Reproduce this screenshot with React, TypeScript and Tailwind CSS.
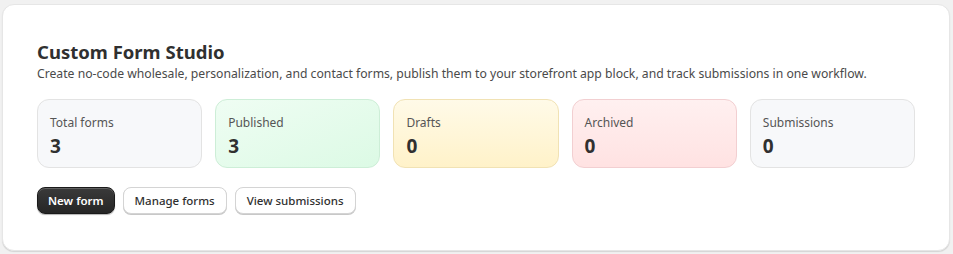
import React from "react";

const stats = [
  { label: "Total forms", value: "3", tone: "bg-[#f7f8fa] border-[#e3e3e3]" },
  { label: "Published", value: "3", tone: "bg-gradient-to-br from-[#effdf3] to-[#dcfae5] border-[#cdeed7]" },
  { label: "Drafts", value: "0", tone: "bg-gradient-to-b from-[#fffae8] to-[#fff2c9] border-[#f1e2b4]" },
  { label: "Archived", value: "0", tone: "bg-gradient-to-b from-[#fff0f0] to-[#ffe2e2] border-[#f2cfd1]" },
  { label: "Submissions", value: "0", tone: "bg-[#f7f8fa] border-[#e3e3e3]" },
];

const StatCard = ({ label, value, tone }: { label: string; value: string; tone: string }) => (
  <div className={`flex h-[69px] flex-col rounded-[12px] border px-3 pt-[14px] ${tone}`}>
    <span className="text-[12px] leading-[18px] text-[#555]">{label}</span>
    <span className="mt-[2px] text-[19px] font-bold leading-[24px] text-[#303030]">{value}</span>
  </div>
);

export default function App() {
  return (
    <div
      className="min-h-[254px] bg-[#f1f1f1] pb-[4px] pl-[2px] pr-[3px] pt-[4px]"
      style={{ fontFamily: '"Noto Sans", "Open Sans", sans-serif' }}
    >
      <section className="rounded-[12px] border border-[#e6e6e6] bg-white px-[34px] pb-[36px] pt-[35px] shadow-[0_1px_1px_rgba(0,0,0,0.12)]">
        <h1 className="text-[18.5px] font-bold leading-[24px] text-[#303030]">Custom Form Studio</h1>
        <p className="text-[12.2px] leading-[20px] text-[#4a4a4a]">
          Create no-code wholesale, personalization, and contact forms, publish them to your storefront app block, and track submissions in one workflow.
        </p>
        <div className="mt-[15px] grid grid-cols-5 gap-[13px]">
          {stats.map((s) => (
            <StatCard key={s.label} {...s} />
          ))}
        </div>
        <div className="mt-[19px] flex gap-2">
          <button className="h-[27px] rounded-[8px] border border-[#1a1a1a] bg-gradient-to-b from-[#3a3a3a] to-[#262626] px-[10px] text-[11.5px] font-semibold text-white shadow-[inset_0_1px_0_rgba(255,255,255,0.2),0_1px_1px_rgba(0,0,0,0.3)]">
            New form
          </button>
          <button className="h-[27px] rounded-[8px] border border-[#d4d4d4] bg-white px-[11px] text-[11.5px] font-medium text-[#303030] shadow-[0_1px_0_#c8c8c8]">
            Manage forms
          </button>
          <button className="h-[27px] rounded-[8px] border border-[#d4d4d4] bg-white px-[11px] text-[11.5px] font-medium text-[#303030] shadow-[0_1px_0_#c8c8c8]">
            View submissions
          </button>
        </div>
      </section>
    </div>
  );
}
